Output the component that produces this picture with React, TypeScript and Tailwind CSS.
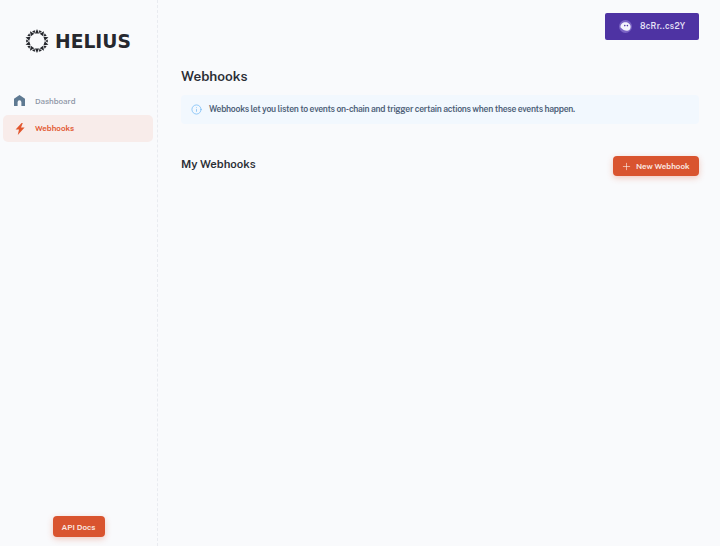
import { Info, Plus } from "lucide-react";

const font = { fontFamily: '"Public Sans", Inter, "Noto Sans", sans-serif' };

function Logo() {
  const steps = Array.from({ length: 10 }, (_, i) => i * 36);
  return (
    <svg width="24" height="24" viewBox="0 0 24 24" fill="#26282e">
      {steps.map((deg) => (
        <g key={deg} transform={`rotate(${deg} 12 12)`}>
          <polygon points="12,0 14.1,4.5 9.9,4.5" />
          <polygon points="12,4 10.4,1.2 13.6,1.2" transform="rotate(18 12 12)" />
        </g>
      ))}
    </svg>
  );
}

function HomeIcon() {
  return (
    <svg width="11" height="11" viewBox="0 0 11 11">
      <path
        fillRule="evenodd"
        d="M5.5 0 L11 3.8 V11 H7.4 V7.2 A1.9 1.9 0 0 0 3.6 7.2 V11 H0 V3.8 Z"
        fill="#5f7a92"
      />
    </svg>
  );
}

function BoltIcon() {
  return (
    <svg width="10" height="12" viewBox="0 0 10 12">
      <path d="M6.6 0 L0.6 6.6 H4 L2.8 12 L9.6 4.6 H6 L7.8 0 Z" fill="#e2562d" />
    </svg>
  );
}

function Ghost() {
  return (
    <span className="flex h-[13px] w-[13px] items-center justify-center rounded-full bg-[#7a63c4]">
      <svg width="11" height="9" viewBox="0 0 11 9">
        <path d="M0.4 5.2 C0.4 2 2.8 0.3 5.4 0.3 C8.2 0.3 10.6 2.4 10.6 5 C10.6 7.4 9 8.7 7 8.7 C4.6 8.7 2.6 7.6 0.4 5.2 Z" fill="#f4f2fc" />
        <circle cx="4.8" cy="3.6" r="0.8" fill="#4e33a3" />
        <circle cx="7.4" cy="3.6" r="0.8" fill="#4e33a3" />
      </svg>
    </span>
  );
}

export default function App() {
  return (
    <div style={font} className="flex h-[546px] w-[720px] overflow-hidden bg-[#f9fafc] text-[#2a2d34]">
      <aside className="flex w-[158px] shrink-0 flex-col border-r border-dashed border-[#e9ebf0] px-[3px] pb-[9px] pt-[29px]">
        <div className="flex items-center gap-[6px] pl-[22px]">
          <Logo />
          <span style={{ fontFamily: '"DejaVu Sans", sans-serif' }} className="pt-[2px] text-[18.7px] leading-none font-bold text-[#26282e]">
            HELIUS
          </span>
        </div>
        <nav className="mt-[34px] flex flex-col">
          <a className="flex h-[27px] items-center gap-[10px] pl-[11px] text-[8px] font-medium text-[#8a93a3]">
            <span className="flex w-[11px] justify-center"><HomeIcon /></span>
            Dashboard
          </a>
          <a className="mt-[1px] flex h-[27px] w-[150px] items-center gap-[10px] rounded-[5px] bg-[#f8ecea] pl-[11px] text-[8px] font-semibold text-[#e2562d]">
            <span className="flex w-[11px] justify-center"><BoltIcon /></span>
            <span className="mb-[1px]">Webhooks</span>
          </a>
        </nav>
        <button className="mx-auto mt-auto flex h-[21px] w-[52px] items-center justify-center rounded-[4px] bg-[#d9542f] text-[8px] font-semibold text-[#fbeae4] shadow-[0_2px_6px_rgba(223,84,48,0.3)]">
          API Docs
        </button>
      </aside>
      <main className="flex min-w-0 flex-1 flex-col pl-[23px] pr-[21px] pt-[13px]">
        <div className="flex justify-end">
          <button className="flex h-[27px] w-[94px] items-center gap-[8px] rounded-[2px] bg-[#4e33a3] pl-[14px] text-[8.4px] font-semibold tracking-[0.3px] text-[#e6e2f7]">
            <Ghost />
            8cRr..cs2Y
          </button>
        </div>
        <h1 className="mt-[27px] text-[13.6px] leading-[18px] font-semibold">Webhooks</h1>
        <div className="mt-[10px] flex h-[29px] items-center gap-[7px] rounded-[4px] bg-[#f2f8fe] pl-[10px] text-[8.6px] font-semibold tracking-[-0.27px] text-[#4b5d76]">
          <Info size={11} strokeWidth={1.5} className="text-[#69b5f5]" />
          <span className="mb-[1px]">Webhooks let you listen to events on-chain and trigger certain actions when these events happen.</span>
        </div>
        <div className="mt-[29px] flex items-center justify-between">
          <h2 className="text-[11.4px] font-semibold">My Webhooks</h2>
          <button className="mt-[3px] flex h-[20px] w-[86px] items-center gap-[4px] rounded-[4px] bg-[#d9542f] pl-[8px] text-[8px] font-semibold text-[#fbeae4] shadow-[0_2px_6px_rgba(223,84,48,0.3)]">
            <Plus size={11} strokeWidth={1.4} />
            New Webhook
          </button>
        </div>
      </main>
    </div>
  );
}
